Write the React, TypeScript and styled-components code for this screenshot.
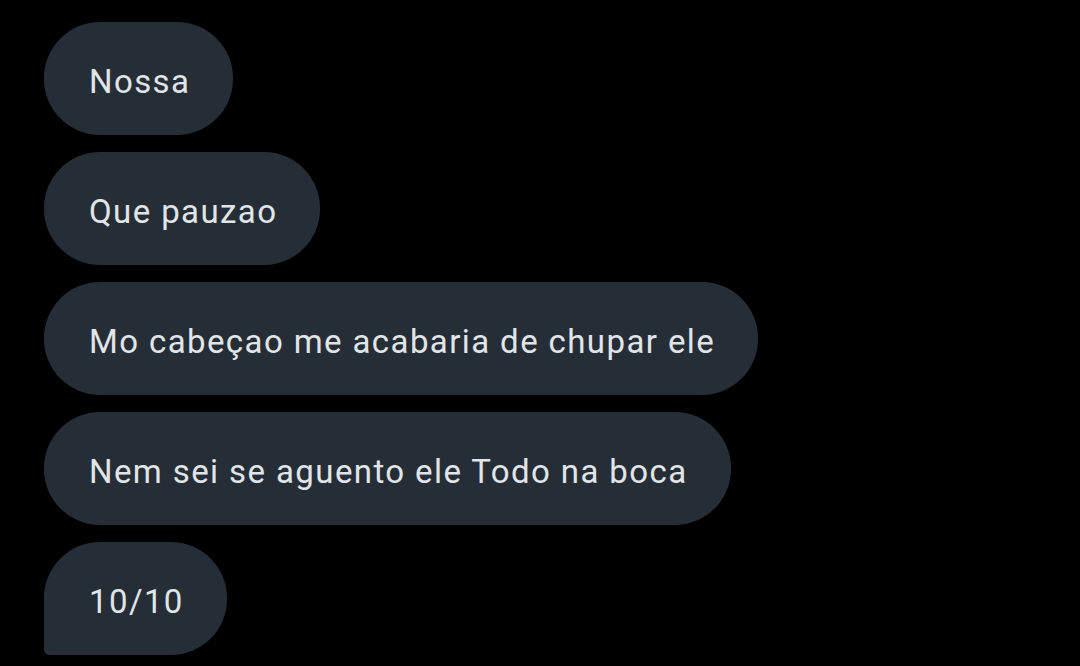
import React from "react";
import styled, { createGlobalStyle } from "styled-components";

const Global = createGlobalStyle`
  html, body { margin: 0; padding: 0; background: #000; }
  body { font-family: Roboto, "Noto Sans", sans-serif; }
`;

const Thread = styled.div`
  display: flex;
  flex-direction: column;
  align-items: flex-start;
  gap: 17px;
  padding: 22px 0 0 44px;
  min-height: 666px;
  box-sizing: border-box;
  background: #000;
`;

const Bubble = styled.div<{ $last?: boolean }>`
  height: 113px;
  box-sizing: border-box;
  display: flex;
  align-items: center;
  padding: 5px 43px 0 45px;
  background: #252e37;
  color: #e2e5e8;
  font-size: 33px;
  letter-spacing: 1.4px;
  border-radius: ${(p) => (p.$last ? "56px 56px 56px 5px" : "56px")};
  white-space: nowrap;
`;

const messages = [
  "Nossa",
  "Que pauzao",
  "Mo cabeçao me acabaria de chupar ele",
  "Nem sei se aguento ele Todo na boca",
  "10/10",
];

export default function App() {
  return (
    <>
      <Global />
      <Thread>
        {messages.map((m, i) => (
          <Bubble key={i} $last={i === messages.length - 1}>
            {m}
          </Bubble>
        ))}
      </Thread>
    </>
  );
}
